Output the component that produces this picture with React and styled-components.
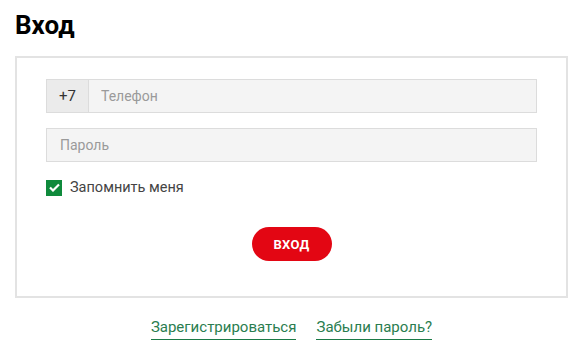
import React from 'react'
import styled, { createGlobalStyle } from 'styled-components'

const GlobalStyle = createGlobalStyle`
  body {
    margin: 0;
    background: #fff;
    font-family: Roboto, "Liberation Sans", sans-serif;
  }
`

const Page = styled.div`
  width: 584px;
  padding: 8px 16px 0 15px;
  box-sizing: border-box;
`

const Title = styled.h1`
  margin: 0 0 14px;
  font-family: Roboto, "Liberation Sans", sans-serif;
  font-weight: 700;
  font-size: 26px;
  line-height: 34px;
  color: #000;
`

const Card = styled.div`
  border: 2px solid #e3e3e3;
  padding: 21px 29px 35px;
  display: flex;
  flex-direction: column;
`

const Field = styled.div`
  display: flex;
  height: 34px;
  border: 1px solid #dcdcdc;
  background: #f4f4f4;
  box-sizing: border-box;
  margin-bottom: ${p => p.$gap || 0}px;
`

const Prefix = styled.div`
  width: 41px;
  display: flex;
  align-items: center;
  justify-content: center;
  background: #ebebeb;
  border-right: 1px solid #dcdcdc;
  font-size: 15px;
  color: #333;
`

const Input = styled.input`
  flex: 1;
  border: none;
  background: transparent;
  outline: none;
  padding: 0 ${p => p.$pad || 12}px;
  font-family: Roboto, "Liberation Sans", sans-serif;
  font-size: 14px;
  color: #333;
  &::placeholder {
    color: #9a9a9a;
  }
`

const Remember = styled.label`
  display: flex;
  align-items: center;
  gap: 8px;
  margin-top: 17px;
  font-size: 14.5px;
  color: #444;
`

const Box = styled.span`
  width: 16px;
  height: 16px;
  background: #0f8a3c;
  display: flex;
  align-items: center;
  justify-content: center;
`

const Submit = styled.button`
  align-self: center;
  margin-top: 31px;
  width: 80px;
  height: 34px;
  border: none;
  border-radius: 17px;
  background: #e30613;
  color: #fff;
  font-family: Roboto, "Liberation Sans", sans-serif;
  font-weight: 700;
  font-size: 13px;
  letter-spacing: 0.3px;
`

const Links = styled.div`
  display: flex;
  justify-content: center;
  gap: 20px;
  margin-top: 20px;
`

const Link = styled.a`
  font-size: 15px;
  color: #2a7d4f;
  text-decoration: none;
  padding-bottom: 3px;
  border-bottom: 1px solid #1c7a47;
  line-height: 18px;
`

export default function App () {
  return (
    <Page>
      <GlobalStyle />
      <Title>Вход</Title>
      <Card>
        <Field $gap={15}>
          <Prefix>+7</Prefix>
          <Input $pad={12} placeholder='Телефон' />
        </Field>
        <Field>
          <Input $pad={13} type='password' placeholder='Пароль' />
        </Field>
        <Remember>
          <Box>
            <svg width='11' height='9' viewBox='0 0 11 9'>
              <path d='M1 4.5 L4 7.5 L10 1.5' stroke='#fff' strokeWidth='2.2' fill='none' />
            </svg>
          </Box>
          Запомнить меня
        </Remember>
        <Submit>ВХОД</Submit>
      </Card>
      <Links>
        <Link href='#'>Зарегистрироваться</Link>
        <Link href='#'>Забыли пароль?</Link>
      </Links>
    </Page>
  )
}
